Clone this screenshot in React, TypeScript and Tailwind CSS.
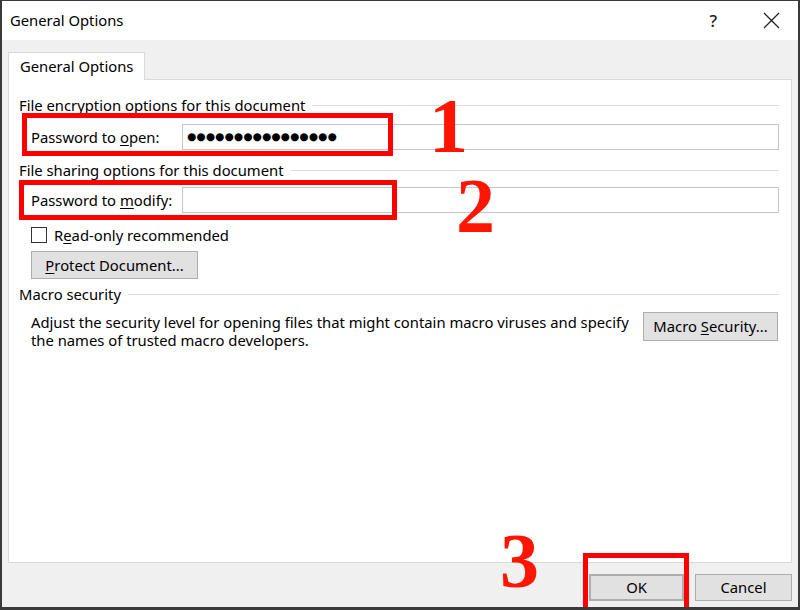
import React from 'react';

const font = "font-['Noto_Sans','Liberation_Sans',sans-serif]";
const digit = "absolute text-[78px] leading-none font-bold text-[#ff1500] font-['Liberation_Serif',serif]";

function GroupHeader({ label, className = '' }: { label: string; className?: string }) {
  return (
    <div className={`flex items-center h-[20px] ${className}`}>
      <span className="whitespace-nowrap">{label}</span>
      <div className="flex-1 h-px bg-[#dcdcdc] ml-[7px]" />
    </div>
  );
}

function Key({ children }: { children: React.ReactNode }) {
  return <span className="underline underline-offset-2 decoration-1">{children}</span>;
}

function WinButton({ children, className = '' }: { children: React.ReactNode; className?: string }) {
  return (
    <button className={`bg-[#e1e1e1] border border-[#adadad] flex items-center justify-center text-[14.8px] ${className}`}>
      {children}
    </button>
  );
}

export default function App() {
  return (
    <div className={`relative w-[800px] h-[610px] bg-[#f0f0f0] border-t border-x-2 border-b-[3px] border-[#3a3a3a] flex flex-col text-black text-[14.8px] overflow-hidden ${font}`}>
      {/* title bar */}
      <div className="h-[39px] bg-white flex items-center pl-[8px] pr-[18px] shrink-0">
        <span>General Options</span>
        <span className="ml-auto text-[17px] font-medium text-[#222]">?</span>
        <svg className="ml-[46px]" width="17" height="17" viewBox="0 0 17 17">
          <path d="M1 1 L16 16 M16 1 L1 16" stroke="#222" strokeWidth="1.3" />
        </svg>
      </div>

      <div className="flex-1 flex flex-col px-[6px] pt-[12px]">
        {/* tab strip */}
        <div className="flex">
          <div className="relative z-10 h-[28px] -mb-px bg-white border-t border-x border-[#d9d9d9] px-[11px] flex items-center">
            General Options
          </div>
        </div>

        {/* panel */}
        <div className="h-[484px] bg-white border border-[#d9d9d9] pl-[10px] pr-[12px] pt-[15px] flex flex-col">
          <GroupHeader label="File encryption options for this document" />
          <div className="flex items-center h-[26px] mt-[9px] ml-[12px]">
            <span className="w-[151px] shrink-0">
              Password to <Key>o</Key>pen:
            </span>
            <div className="flex-1 h-full border border-[#c3c6c9] flex items-center pl-[4px] text-[10.5px] tracking-[0.2px] font-['DejaVu_Sans',sans-serif]">
              ●●●●●●●●●●●●●●●●
            </div>
          </div>

          <GroupHeader label="File sharing options for this document" className="mt-[10px]" />
          <div className="flex items-center h-[26px] mt-[7px] ml-[12px]">
            <span className="w-[151px] shrink-0">
              Password to <Key>m</Key>odify:
            </span>
            <div className="flex-1 h-full border border-[#c3c6c9]" />
          </div>

          <div className="flex items-center h-[20px] mt-[12px] ml-[12px]">
            <div className="w-[16px] h-[16px] border border-[#333] bg-white" />
            <span className="ml-[7px]">
              R<Key>e</Key>ad-only recommended
            </span>
          </div>

          <WinButton className="mt-[6px] ml-[12px] w-[167px] h-[28px]">
            <span>
              <Key>P</Key>rotect Document...
            </span>
          </WinButton>

          <GroupHeader label="Macro security" className="mt-[5px]" />
          <div className="flex items-start justify-between mt-[8px] ml-[12px] mr-[1px]">
            <p className="leading-[18px] pt-[1px]">
              Adjust the security level for opening files that might contain macro viruses and specify
              <br />
              the names of trusted macro developers.
            </p>
            <WinButton className="w-[135px] h-[29px] shrink-0">
              <span>
                Macro <Key>S</Key>ecurity...
              </span>
            </WinButton>
          </div>
        </div>

        {/* footer */}
        <div className="flex justify-end gap-[11px] mt-[11px]">
          <WinButton className="w-[95px] h-[27px] border-2 border-[#3c8ad8]">OK</WinButton>
          <WinButton className="w-[97px] h-[27px]">Cancel</WinButton>
        </div>
      </div>

      {/* annotation overlays */}
      <div className="absolute left-[20px] top-[112px] w-[371px] h-[43px] border-[5px] border-[#ff0000]" />
      <div className="absolute left-[17px] top-[179px] w-[378px] h-[40px] border-[5px] border-[#ff0000]" />
      <div className="absolute left-[581px] top-[552px] w-[106px] h-[70px] border-[5px] border-[#ff0000]" />

      <span className={`${digit} left-[427px] top-[86px]`}>1</span>
      <span className={`${digit} left-[454px] top-[166px]`}>2</span>
      <span className={`${digit} left-[498px] top-[521px]`}>3</span>
    </div>
  );
}
